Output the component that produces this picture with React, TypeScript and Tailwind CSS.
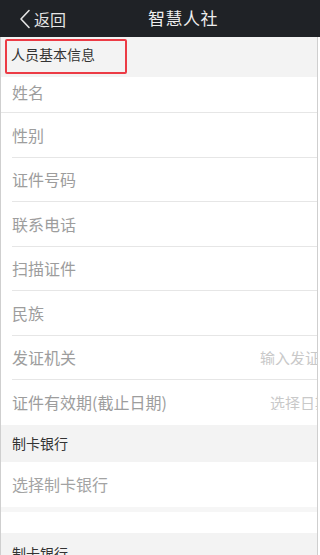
import React from "react";

const font = { fontFamily: '"Noto Sans CJK SC", "Noto Sans", sans-serif' };

type Row = { label: string; hint?: string };

const rows: Row[] = [
  { label: "性别" },
  { label: "证件号码" },
  { label: "联系电话" },
  { label: "扫描证件" },
  { label: "民族" },
  { label: "发证机关", hint: "输入发证机关" },
  { label: "证件有效期(截止日期)", hint: "选择日期" },
];

const App: React.FC = () => {
  return (
    <div
      className="w-[320px] h-[555px] overflow-hidden bg-white flex flex-col"
      style={font}
    >
      {/* Header */}
      <div className="h-[37px] shrink-0 bg-[#1f2226] flex items-center relative">
        <div className="flex items-center pl-[19px] text-[#e4e4e4]">
          <svg width="12" height="20" viewBox="0 0 12 20" fill="none">
            <path
              d="M10 1.5 L2 10 L10 18.5"
              stroke="#e4e4e4"
              strokeWidth="1.6"
              strokeLinecap="round"
              strokeLinejoin="round"
            />
          </svg>
          <span className="ml-[3px] text-[16px] leading-none">返回</span>
        </div>
        <span className="absolute left-[148px] top-[8px] text-[17px] leading-[20px] text-[#eeeeee] tracking-[0.5px]">
          智慧人社
        </span>
      </div>

      {/* Body */}
      <div className="flex-1 w-[318px] border-l border-r border-[#cfcfcf] overflow-hidden whitespace-nowrap">
        {/* Section header */}
        <div className="h-[40px] bg-[#f3f3f3] relative flex items-center pl-[10px]">
          <span className="text-[14px] text-[#333333] leading-none -mt-[6px]">
            人员基本信息
          </span>
          <div className="absolute left-[4px] top-[2px] w-[122px] h-[35px] border-2 border-[#ec3b45] rounded-[2px]" />
        </div>

        {/* First row */}
        <div className="h-[36px] flex items-center pl-[11px] pb-[6px] border-b border-[#e6e6e6]">
          <span className="text-[16px] text-[#9d9d9d] leading-none">姓名</span>
        </div>

        {rows.map((r, i) => (
          <div key={i} className="ml-[11px]">
            <div
              className={`h-[44.5px] flex items-center justify-between ${
                i < rows.length - 1 ? "border-b border-[#e6e6e6]" : ""
              }`}
            >
              <span className="text-[16px] text-[#9d9d9d] leading-none">
                {r.label}
              </span>
              {r.hint && (
                <span
                  className={`text-[15px] text-[#c9c9c9] leading-none shrink-0 overflow-hidden ${
                    r.label === "发证机关" ? "w-[57px]" : "w-[47px]"
                  }`}
                >
                  {r.hint}
                </span>
              )}
            </div>
          </div>
        ))}

        {/* Bank section */}
        <div className="h-[37px] bg-[#f3f3f3] flex items-center pl-[11px]">
          <span className="text-[14px] text-[#333333] leading-none">制卡银行</span>
        </div>
        <div className="h-[45px] flex items-center pl-[11px]">
          <span className="text-[16px] text-[#a3a3a3] leading-none">
            选择制卡银行
          </span>
        </div>
        <div className="h-[5px] bg-[#f6f6f6]" />
        <div className="h-[21px] bg-white" />
        <div className="h-[40px] bg-[#f3f3f3] pl-[11px] pt-[7px]">
          <span className="text-[14px] text-[#333333] leading-none">制卡银行</span>
        </div>
      </div>
    </div>
  );
};

export default App;
